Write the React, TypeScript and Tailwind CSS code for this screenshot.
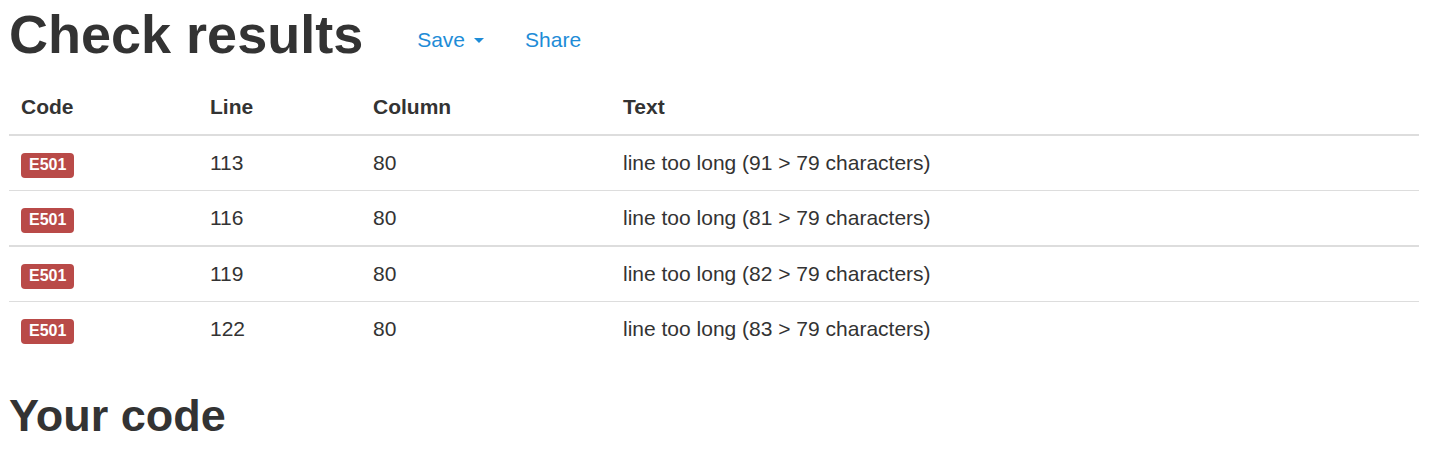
import React from "react";

const rows = [
  { line: "113", col: "80", text: "line too long (91 > 79 characters)" },
  { line: "116", col: "80", text: "line too long (81 > 79 characters)" },
  { line: "119", col: "80", text: "line too long (82 > 79 characters)" },
  { line: "122", col: "80", text: "line too long (83 > 79 characters)" },
];

function Label() {
  return (
    <span className="inline-block rounded-[4px] bg-[#b94a48] px-[8px] pt-[4px] pb-[5px] text-[16px] font-bold leading-none text-white">
      E501
    </span>
  );
}

function Row({ r, thick }: { r: (typeof rows)[number]; thick?: boolean }) {
  const b = thick ? "border-t-2" : "border-t";
  const cell = `${b} border-[#dddddd] p-[12px] align-top`;
  return (
    <tr>
      <td className={cell}>
        <Label />
      </td>
      <td className={cell}>{r.line}</td>
      <td className={cell}>{r.col}</td>
      <td className={cell}>{r.text}</td>
    </tr>
  );
}

export default function App() {
  return (
    <div
      className="min-h-[460px] bg-white pt-[5px] pl-[9px] pr-[18px] text-[21px] leading-[30px] text-[#333333]"
      style={{ fontFamily: '"Liberation Sans", Arial, Helvetica, sans-serif' }}
    >
      <div className="flex items-start">
        <h1 className="mb-[16px] text-[54px] font-bold leading-[59px]">Check results</h1>
        <div className="ml-[54px] mt-[20px] flex items-center text-[#1e8cd7]">
          <a className="flex items-center">
            Save
            <span className="ml-[9px] inline-block h-0 w-0 border-x-[5px] border-t-[5px] border-x-transparent border-t-[#1e8cd7]" />
          </a>
          <a className="ml-[41px]">Share</a>
        </div>
      </div>
      <table className="w-[1410px] border-collapse text-left">
        <colgroup>
          <col className="w-[189px]" />
          <col className="w-[163px]" />
          <col className="w-[250px]" />
          <col />
        </colgroup>
        <thead>
          <tr>
            {["Code", "Line", "Column", "Text"].map((h) => (
              <th key={h} className="border-b-2 border-[#dddddd] p-[12px] text-left align-bottom font-bold">
                {h}
              </th>
            ))}
          </tr>
        </thead>
        <tbody>
          <Row r={rows[0]} />
          <Row r={rows[1]} />
        </tbody>
        <tbody>
          <Row r={rows[2]} thick />
          <Row r={rows[3]} />
        </tbody>
      </table>
      <h2 className="mt-[35px] text-[45px] font-bold leading-[49px]">Your code</h2>
    </div>
  );
}
